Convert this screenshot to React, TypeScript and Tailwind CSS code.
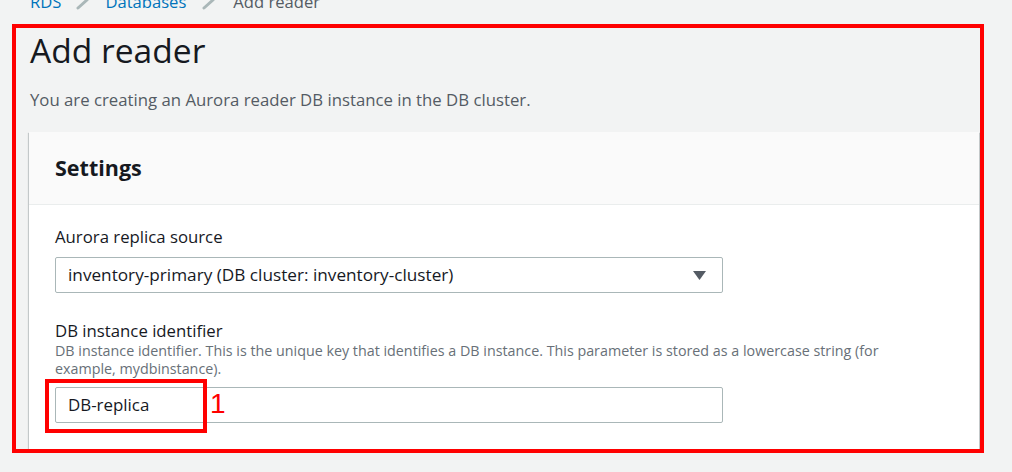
import React from "react";

function Chevron() {
  return (
    <svg width="16" height="24" viewBox="0 0 16 24" className="shrink-0">
      <path d="M3 -4 L12 4 L3 12" fill="none" stroke="#aab7b8" strokeWidth="3" strokeLinecap="round" strokeLinejoin="round" />
    </svg>
  );
}

export default function App() {
  return (
    <div
      className="relative w-[1012px] h-[472px] overflow-hidden bg-[#f2f3f3] text-[#16191f]"
      style={{ fontFamily: '"Open Sans", "Noto Sans", sans-serif' }}
    >
      {/* breadcrumb */}
      <div className="flex items-start h-[14px] pl-[30px] -mt-[9px] text-[16.6px] leading-[22px]">
        <span className="text-[#0073bb]">RDS</span>
        <div className="mx-[14px] mt-[5px]">
          <Chevron />
        </div>
        <span className="text-[#0073bb]">Databases</span>
        <div className="ml-[15px] mr-[16px] mt-[5px]">
          <Chevron />
        </div>
        <span className="text-[#545b64]">Add reader</span>
      </div>

      <div className="pl-[29px] pr-[33px]">
        <h1 className="mt-[25px] text-[33.6px] leading-[40px] font-normal pl-[1px]">Add reader</h1>
        <p className="mt-[19px] text-[16.75px] leading-[22px] text-[#545b64] pl-[1px]">
          You are creating an Aurora reader DB instance in the DB cluster.
        </p>

        <div className="mt-[21px] bg-white shadow-[0_1px_1px_0_rgba(0,28,36,0.3),1px_1px_1px_0_rgba(0,28,36,0.15),-1px_1px_1px_0_rgba(0,28,36,0.15)]">
          <div className="h-[73px] bg-[#fafafa] border-b border-[#eaeded] flex items-center pl-[26px]">
            <h2 className="text-[21.5px] leading-[28px] font-bold mt-[-1px]">Settings</h2>
          </div>
          <div className="pl-[26px] pr-[256px] pt-[21px] pb-[26px]">
            <div className="text-[16.75px] leading-[22px]">Aurora replica source</div>
            <div className="mt-[9px] h-[36px] border border-[#aab7b8] rounded-[2px] flex items-center justify-between pl-[12px] pr-[16px]">
              <span className="text-[17.2px] leading-[22px]">inventory-primary (DB cluster: inventory-cluster)</span>
              <svg width="13" height="9" viewBox="0 0 13 9">
                <path d="M0 0 H13 L6.5 9 Z" fill="#545b64" />
              </svg>
            </div>

            <div className="mt-[27px] text-[16.75px] leading-[22px]">DB instance identifier</div>
            <div className="text-[14.3px] leading-[18px] text-[#687078] w-[860px]">
              DB instance identifier. This is the unique key that identifies a DB instance. This parameter is stored as a lowercase string (for
              example, mydbinstance).
            </div>
            <div className="mt-[9px] h-[36px] border border-[#aab7b8] rounded-[2px] flex items-center pl-[12px]">
              <span className="text-[16.9px] leading-[22px]">DB-replica</span>
            </div>
          </div>
        </div>
      </div>

      {/* red annotation overlays */}
      <div className="absolute left-[12px] top-[24px] w-[972px] h-[429px] border-[4px] border-[#ff0000] pointer-events-none" />
      <div className="absolute left-[45px] top-[379px] w-[162px] h-[54px] border-[4px] border-[#ff0000] pointer-events-none" />
      <div
        className="absolute left-[210px] top-[387px] text-[28px] leading-[34px] text-[#ff0000] font-light"
        style={{ fontFamily: '"Liberation Sans", sans-serif' }}
      >
        1
      </div>
    </div>
  );
}
